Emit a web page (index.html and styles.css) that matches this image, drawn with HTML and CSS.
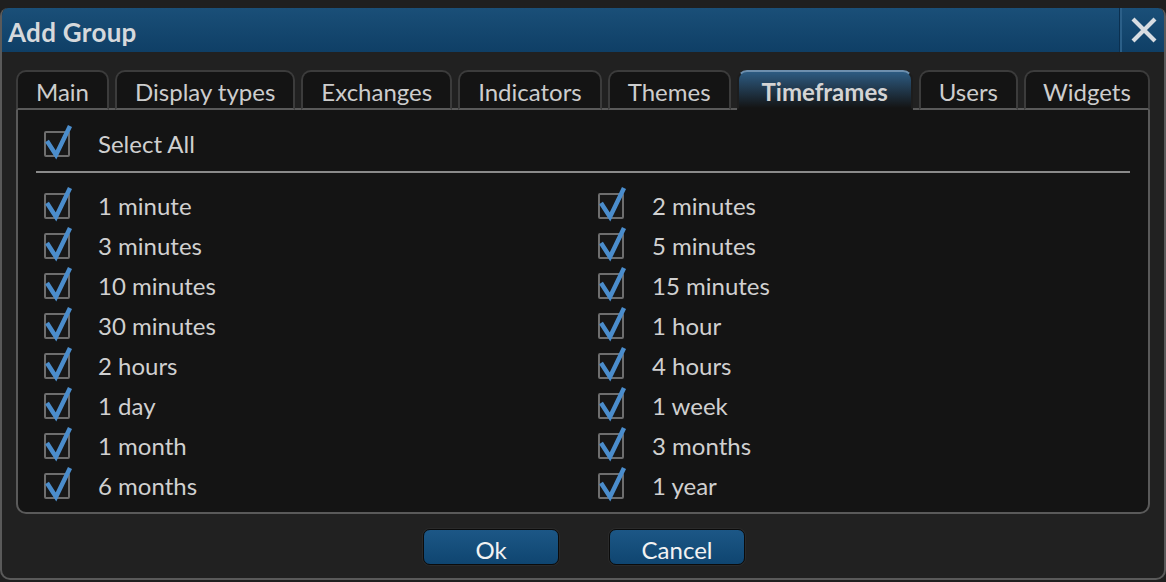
FILE: index.html
```html
<!DOCTYPE html>
<html>
<head>
<meta charset="utf-8">
<link rel="stylesheet" href="styles.css">
</head>
<body>
<div class="window">
  <div class="titlebar">
    <div class="title">Add Group</div>
    <div class="close">
      <svg width="28" height="26" viewBox="0 0 28 26"><path d="M3 2 L25 24 M25 2 L3 24" stroke="#d8dde2" stroke-width="4.2" fill="none"/></svg>
    </div>
  </div>
  <div class="body">
    <div class="tabs">
      <div class="tab">Main</div>
      <div class="tab">Display types</div>
      <div class="tab">Exchanges</div>
      <div class="tab">Indicators</div>
      <div class="tab">Themes</div>
      <div class="tab active">Timeframes</div>
      <div class="tab">Users</div>
      <div class="tab">Widgets</div>
    </div>
    <div class="panel">
      <div class="row all"><span class="cb"><svg viewBox="0 0 30 34"><path d="M3 18 L12 32 L26 3" /></svg></span><span class="lbl">Select All</span></div>
      <div class="sep"></div>
      <div class="grid">
        <div class="row"><span class="cb"><svg viewBox="0 0 30 34"><path d="M3 18 L12 32 L26 3" /></svg></span><span class="lbl">1 minute</span></div>
        <div class="row"><span class="cb"><svg viewBox="0 0 30 34"><path d="M3 18 L12 32 L26 3" /></svg></span><span class="lbl">2 minutes</span></div>
        <div class="row"><span class="cb"><svg viewBox="0 0 30 34"><path d="M3 18 L12 32 L26 3" /></svg></span><span class="lbl">3 minutes</span></div>
        <div class="row"><span class="cb"><svg viewBox="0 0 30 34"><path d="M3 18 L12 32 L26 3" /></svg></span><span class="lbl">5 minutes</span></div>
        <div class="row"><span class="cb"><svg viewBox="0 0 30 34"><path d="M3 18 L12 32 L26 3" /></svg></span><span class="lbl">10 minutes</span></div>
        <div class="row"><span class="cb"><svg viewBox="0 0 30 34"><path d="M3 18 L12 32 L26 3" /></svg></span><span class="lbl">15 minutes</span></div>
        <div class="row"><span class="cb"><svg viewBox="0 0 30 34"><path d="M3 18 L12 32 L26 3" /></svg></span><span class="lbl">30 minutes</span></div>
        <div class="row"><span class="cb"><svg viewBox="0 0 30 34"><path d="M3 18 L12 32 L26 3" /></svg></span><span class="lbl">1 hour</span></div>
        <div class="row"><span class="cb"><svg viewBox="0 0 30 34"><path d="M3 18 L12 32 L26 3" /></svg></span><span class="lbl">2 hours</span></div>
        <div class="row"><span class="cb"><svg viewBox="0 0 30 34"><path d="M3 18 L12 32 L26 3" /></svg></span><span class="lbl">4 hours</span></div>
        <div class="row"><span class="cb"><svg viewBox="0 0 30 34"><path d="M3 18 L12 32 L26 3" /></svg></span><span class="lbl">1 day</span></div>
        <div class="row"><span class="cb"><svg viewBox="0 0 30 34"><path d="M3 18 L12 32 L26 3" /></svg></span><span class="lbl">1 week</span></div>
        <div class="row"><span class="cb"><svg viewBox="0 0 30 34"><path d="M3 18 L12 32 L26 3" /></svg></span><span class="lbl">1 month</span></div>
        <div class="row"><span class="cb"><svg viewBox="0 0 30 34"><path d="M3 18 L12 32 L26 3" /></svg></span><span class="lbl">3 months</span></div>
        <div class="row"><span class="cb"><svg viewBox="0 0 30 34"><path d="M3 18 L12 32 L26 3" /></svg></span><span class="lbl">6 months</span></div>
        <div class="row"><span class="cb"><svg viewBox="0 0 30 34"><path d="M3 18 L12 32 L26 3" /></svg></span><span class="lbl">1 year</span></div>
      </div>
    </div>
    <div class="buttons">
      <button class="btn">Ok</button>
      <button class="btn">Cancel</button>
    </div>
  </div>
</div>
</body>
</html>
```

FILE: styles.css
```css
* { box-sizing: border-box; }
html, body { margin: 0; padding: 0; background: #1f1f1f; }
body {
  font-family: "Lato", "Open Sans", sans-serif;
  padding-top: 8px;
  height: 582px;
  overflow: hidden;
}
.window {
  width: 1166px;
  height: 572px;
  background: #212121;
  border: 2px solid #5a5a5a;
  border-top: none;
  border-radius: 8px 8px 10px 10px;
  overflow: hidden;
  display: flex;
  flex-direction: column;
}
.titlebar {
  height: 44px;
  margin: 0 -2px;
  background: linear-gradient(#1a4f78, #0f3f66);
  display: flex;
  align-items: center;
  border-radius: 8px 8px 0 0;
}
.title {
  flex: 1;
  padding-left: 8px;
  padding-top: 3px;
  font-size: 26px;
  font-weight: 700;
  color: #d6d9dc;
  letter-spacing: 0.3px;
}
.close {
  width: 46px;
  height: 44px;
  border-left: 2px solid #2b5f88;
  box-shadow: -1px 0 0 #0b3050;
  display: flex;
  align-items: center;
  justify-content: center;
}
.body {
  flex: 1;
  padding: 18px 12px 0 14px;
  display: flex;
  flex-direction: column;
}
.tabs {
  display: flex;
  gap: 6px;
  height: 40px;
  position: relative;
  z-index: 1;
  margin-bottom: -2px;
}
.tab {
  padding: 4px 18px 0;
  height: 40px;
  background: #141414;
  border: 2px solid #3c3c3c;
  border-bottom: 2px solid #5a5a5a;
  border-radius: 10px 10px 0 0;
  color: #cdcdcd;
  font-size: 24px;
  line-height: 32px;
  white-space: nowrap;
}
.tab.active {
  padding: 4px 23px 0;
  background: linear-gradient(#2d5b82, #141414);
  border-color: #6d8fae #1d1d1d #141414;
  border-bottom-color: #141414;
  font-weight: 700;
  color: #d4d4d4;
}
.tab:last-child { padding: 4px 17px 0; }
.panel {
  width: 1134px;
  height: 406px;
  background: #141414;
  border: 2px solid #5a5a5a;
  border-radius: 0 0 10px 10px;
  padding: 13px 0 0 26px;
}
.row {
  display: flex;
  align-items: center;
  height: 40px;
}
.cb {
  position: relative;
  width: 26px;
  height: 26px;
  border: 2px solid #6e6e6e;
  border-radius: 2px;
  background: #181818;
  flex: none;
  margin-top: 2px;
}
.cb svg {
  position: absolute;
  left: -2px;
  top: -10px;
  width: 30px;
  height: 34px;
  overflow: visible;
}
.cb svg path {
  fill: none;
  stroke: #4b8dcc;
  stroke-width: 4.5;
  stroke-linejoin: miter;
}
.lbl {
  margin-left: 28px;
  font-size: 24px;
  color: #d0d0d0;
}
.sep {
  height: 2px;
  background: #8a8a8a;
  margin: 8px 18px 12px -8px;
}
.grid {
  display: grid;
  grid-template-columns: 554px 1fr;
}
.buttons {
  display: flex;
  justify-content: center;
  gap: 50px;
  padding-top: 15px;
}
.btn {
  width: 136px;
  height: 36px;
  border: 1px solid #0b0b0b;
  border-radius: 7px;
  background: linear-gradient(#1c5786, #0f4570);
  color: #f2f2f2;
  font-family: "Lato", "Open Sans", sans-serif;
  font-size: 24px;
  line-height: 36px;
  padding: 2px 0 0;
  box-shadow: 0 0 0 1px #2a2a2a;
}
```
